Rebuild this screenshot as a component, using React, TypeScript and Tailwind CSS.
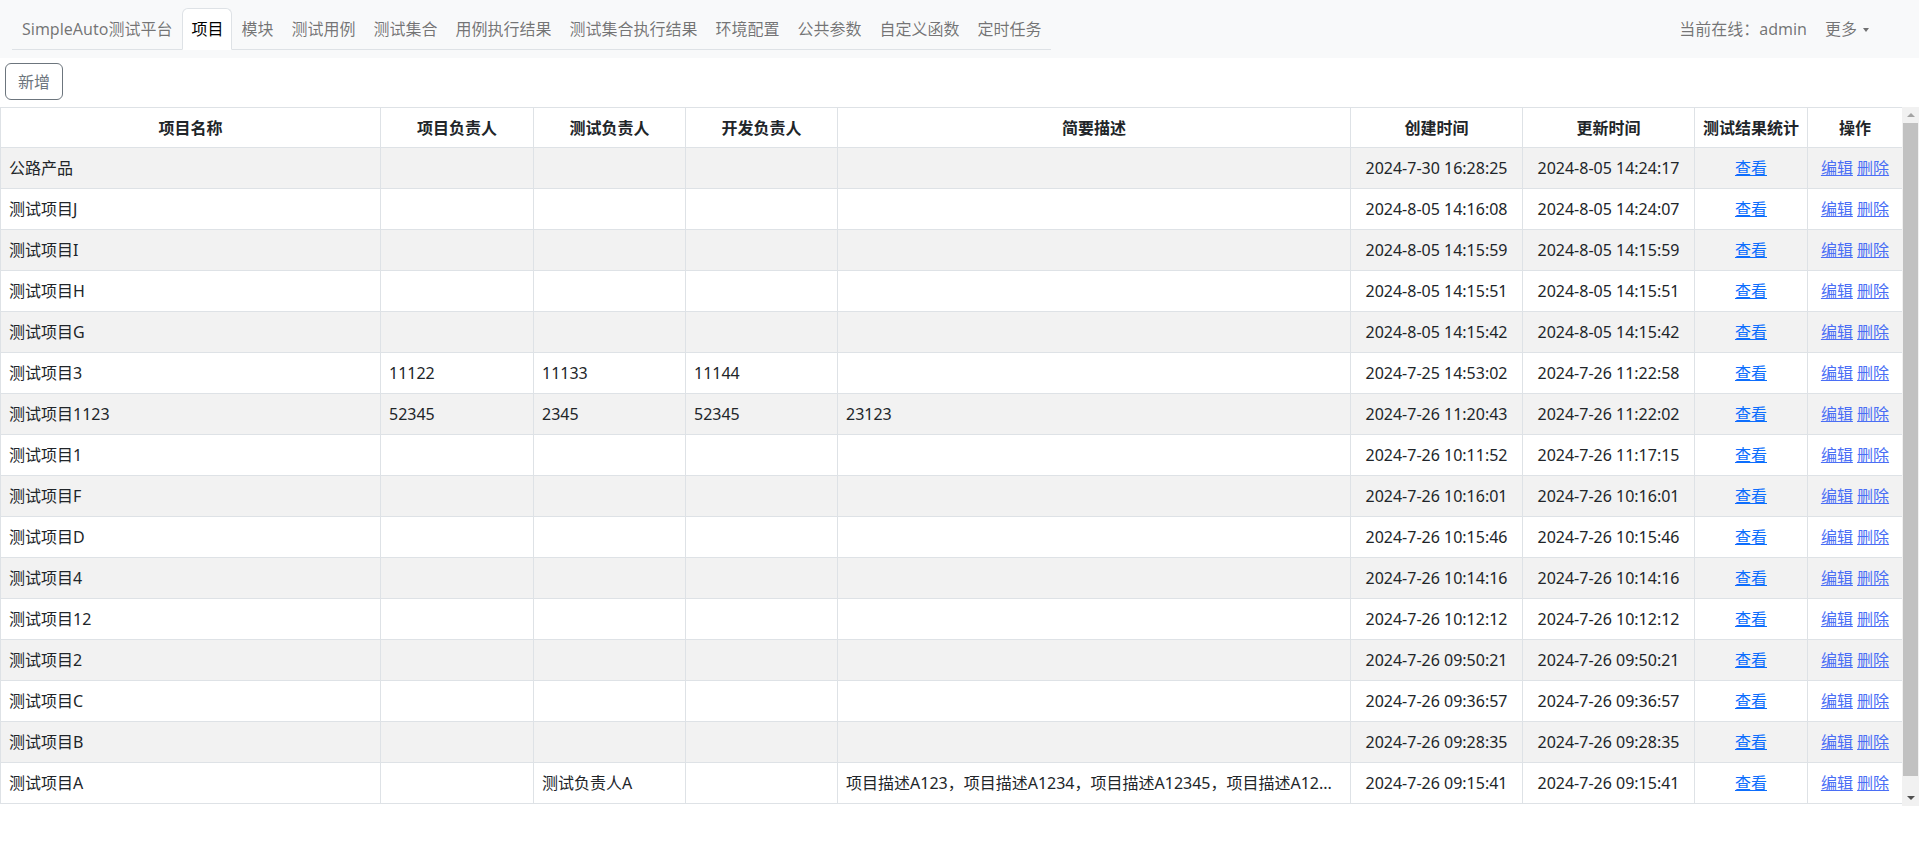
import React from "react";

const tabs = [
  "项目",
  "模块",
  "测试用例",
  "测试集合",
  "用例执行结果",
  "测试集合执行结果",
  "环境配置",
  "公共参数",
  "自定义函数",
  "定时任务",
];

const headers = [
  "项目名称",
  "项目负责人",
  "测试负责人",
  "开发负责人",
  "简要描述",
  "创建时间",
  "更新时间",
  "测试结果统计",
  "操作",
];

const colWidths = [380, 153, 152, 152, 513, 172, 172, 113, 95];

type Project = {
  name: string;
  owner?: string;
  tester?: string;
  dev?: string;
  desc?: string;
  created: string;
  updated: string;
};

const projects: Project[] = [
  { name: "公路产品", created: "2024-7-30 16:28:25", updated: "2024-8-05 14:24:17" },
  { name: "测试项目J", created: "2024-8-05 14:16:08", updated: "2024-8-05 14:24:07" },
  { name: "测试项目I", created: "2024-8-05 14:15:59", updated: "2024-8-05 14:15:59" },
  { name: "测试项目H", created: "2024-8-05 14:15:51", updated: "2024-8-05 14:15:51" },
  { name: "测试项目G", created: "2024-8-05 14:15:42", updated: "2024-8-05 14:15:42" },
  {
    name: "测试项目3",
    owner: "11122",
    tester: "11133",
    dev: "11144",
    created: "2024-7-25 14:53:02",
    updated: "2024-7-26 11:22:58",
  },
  {
    name: "测试项目1123",
    owner: "52345",
    tester: "2345",
    dev: "52345",
    desc: "23123",
    created: "2024-7-26 11:20:43",
    updated: "2024-7-26 11:22:02",
  },
  { name: "测试项目1", created: "2024-7-26 10:11:52", updated: "2024-7-26 11:17:15" },
  { name: "测试项目F", created: "2024-7-26 10:16:01", updated: "2024-7-26 10:16:01" },
  { name: "测试项目D", created: "2024-7-26 10:15:46", updated: "2024-7-26 10:15:46" },
  { name: "测试项目4", created: "2024-7-26 10:14:16", updated: "2024-7-26 10:14:16" },
  { name: "测试项目12", created: "2024-7-26 10:12:12", updated: "2024-7-26 10:12:12" },
  { name: "测试项目2", created: "2024-7-26 09:50:21", updated: "2024-7-26 09:50:21" },
  { name: "测试项目C", created: "2024-7-26 09:36:57", updated: "2024-7-26 09:36:57" },
  { name: "测试项目B", created: "2024-7-26 09:28:35", updated: "2024-7-26 09:28:35" },
  {
    name: "测试项目A",
    tester: "测试负责人A",
    desc: "项目描述A123，项目描述A1234，项目描述A12345，项目描述A12...",
    created: "2024-7-26 09:15:41",
    updated: "2024-7-26 09:15:41",
  },
];

function Navbar() {
  return (
    <nav className="flex h-[58px] items-start bg-[#f8f9fa] pl-[12px] pr-[50px] pt-[8px]">
      <ul className="flex border-b border-[#dee2e6]">
        <li className="-mb-px flex h-[42px] items-center border border-transparent px-[9px] text-[rgba(0,0,0,0.55)]">
          SimpleAuto测试平台
        </li>
        {tabs.map((tab, i) => (
          <li
            key={tab}
            className={
              i === 0
                ? "-mb-px flex h-[42px] items-center rounded-t-[6px] border border-[#dee2e6] border-b-white bg-white px-[8px] text-black"
                : "-mb-px flex h-[42px] items-center border border-transparent px-[8px] text-[rgba(0,0,0,0.55)]"
            }
          >
            {tab}
          </li>
        ))}
      </ul>

      <div className="ml-auto flex h-[42px] items-center text-[rgba(0,0,0,0.55)]">
        <span>当前在线：admin</span>
        <span className="ml-[18px]">更多</span>
        <span className="ml-[6px] mt-[1px] h-0 w-0 border-l-[3.5px] border-r-[3.5px] border-t-[4px] border-l-transparent border-r-transparent border-t-[rgba(0,0,0,0.55)]" />
      </div>
    </nav>
  );
}

// looks like the browser's classic scrollbar next to the table
function FakeScrollbar() {
  return (
    <div className="flex h-[699px] w-[17px] shrink-0 flex-col bg-[#f1f1f1]">
      <div className="flex h-[16px] items-center justify-center">
        <span className="h-0 w-0 border-b-[4px] border-l-[4px] border-r-[4px] border-b-[#a3a3a3] border-l-transparent border-r-transparent" />
      </div>
      <div className="mx-[1px] h-[653px] bg-[#c1c1c1]" />
      <div className="flex-1" />
      <div className="flex h-[16px] items-center justify-center">
        <span className="h-0 w-0 border-l-[4px] border-r-[4px] border-t-[4px] border-l-transparent border-r-transparent border-t-[#505050]" />
      </div>
    </div>
  );
}

export default function App() {
  return (
    <div
      className="min-h-[848px] bg-white text-[16px] text-[#212529]"
      style={{ fontFamily: '"Noto Sans", "Noto Sans CJK SC", sans-serif' }}
    >
      <Navbar />

      <div className="ml-[5px] mt-[5px]">
        <button className="flex h-[37px] items-center rounded-[6px] border border-[#6c757d] px-[12px] text-[#6c757d]">
          新增
        </button>
      </div>

      <div className="mt-[7px] flex h-[699px]">
        <div className="w-[1902px] shrink-0 overflow-hidden">
          <table className="w-[1902px] table-fixed border-collapse">
            <colgroup>
              {colWidths.map((w, i) => (
                <col key={i} style={{ width: w }} />
              ))}
            </colgroup>
            <thead>
              <tr className="h-[40px]">
                {headers.map((h) => (
                  <th
                    key={h}
                    className="border border-[#dee2e6] px-[8px] text-center font-bold"
                  >
                    {h}
                  </th>
                ))}
              </tr>
            </thead>
            <tbody>
              {projects.map((p, i) => (
                <tr
                  key={p.name}
                  className={i % 2 === 0 ? "h-[41px] bg-[#f2f2f2]" : "h-[41px] bg-white"}
                >
                  <td className="border border-[#dee2e6] px-[8px]">{p.name}</td>
                  <td className="border border-[#dee2e6] px-[8px]">{p.owner}</td>
                  <td className="border border-[#dee2e6] px-[8px]">{p.tester}</td>
                  <td className="border border-[#dee2e6] px-[8px]">{p.dev}</td>
                  <td className="whitespace-nowrap border border-[#dee2e6] px-[8px]">
                    {p.desc}
                  </td>
                  <td className="border border-[#dee2e6] px-[8px] text-center">{p.created}</td>
                  <td className="border border-[#dee2e6] px-[8px] text-center">{p.updated}</td>
                  <td className="border border-[#dee2e6] px-[8px] text-center">
                    <a href="#" className="text-[#0d6efd] underline">
                      查看
                    </a>
                  </td>
                  <td className="border border-[#dee2e6] px-[4px] text-center">
                    <a href="#" className="text-[#4a6ef5] underline">
                      编辑
                    </a>{" "}
                    <a href="#" className="text-[#4a6ef5] underline">
                      删除
                    </a>
                  </td>
                </tr>
              ))}
            </tbody>
          </table>
        </div>
        <FakeScrollbar />
      </div>
    </div>
  );
}
